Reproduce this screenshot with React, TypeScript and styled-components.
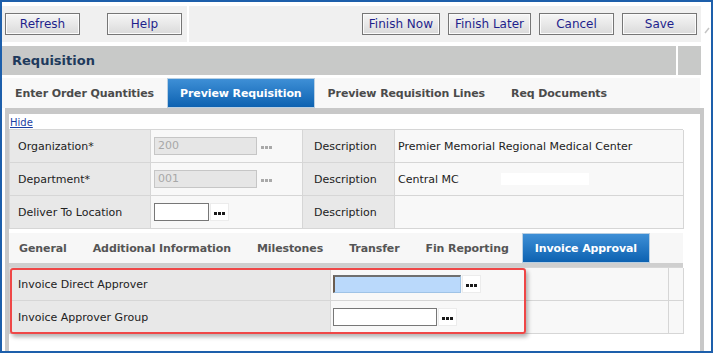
import React from "react";
import styled, { createGlobalStyle } from "styled-components";

const Global = createGlobalStyle`
  html, body { margin: 0; padding: 0; background: #fff; }
  body { font-family: "DejaVu Sans", Verdana, sans-serif; }
`;

const Frame = styled.div`
  position: relative;
  width: 713px;
  height: 353px;
  box-sizing: border-box;
  border: 2px solid #1d5fab;
  background: #fff;
  display: flex;
  overflow: hidden;
`;

const Main = styled.div`
  width: 702px;
  display: flex;
  flex-direction: column;
`;

const Gutter = styled.div`
  flex: 1;
  background: #fff;
  padding-top: 18px;
`;

const Toolbar = styled.div`
  margin-top: 4px;
  height: 36px;
  display: flex;
  gap: 2px;
  margin-right: 3px;
`;

const ToolGroup = styled.div<{ $grow?: boolean }>`
  background: #f0f0f0;
  display: flex;
  align-items: flex-start;
  box-sizing: border-box;
  padding-top: 7px;
  ${(p) =>
    p.$grow
      ? `flex: 1; justify-content: flex-end; gap: 8px; padding-right: 4px;`
      : `width: 185px; justify-content: space-between; padding-left: 3px; padding-right: 5px;`}
`;

const ToolButton = styled.button`
  height: 22px;
  min-width: 75px;
  padding: 0 6px;
  box-sizing: border-box;
  border: 1px solid #767676;
  box-shadow: inset 0 0 0 1px #fbfbfb;
  background: linear-gradient(#f6f6f6, #dadada);
  color: #1f1f8c;
  font-family: "DejaVu Sans", Verdana, sans-serif;
  font-size: 12px;
  line-height: 20px;
  cursor: pointer;
`;

const HeaderBar = styled.div`
  margin-top: 4px;
  height: 29px;
  display: flex;
  gap: 2px;
  margin-right: 3px;
`;

const HeaderMain = styled.div`
  flex: 1;
  background: #c8c9c8;
  display: flex;
  align-items: center;
  padding-left: 10px;
  color: #1e3a5c;
  font-weight: bold;
  font-size: 13px;
`;

const HeaderEnd = styled.div`
  width: 23px;
  background: #c8c9c8;
`;

const TabBar = styled.div`
  margin-top: 3px;
  height: 30px;
  margin-right: 4px;
  background: #f8f8f8;
  display: flex;
`;

const Tab = styled.div<{ $active?: boolean }>`
  height: 30px;
  box-sizing: border-box;
  padding: 0 ${(p) => (p.$active ? 12 : 13)}px;
  display: flex;
  align-items: center;
  font-size: 11px;
  font-weight: bold;
  letter-spacing: -0.1px;
  white-space: nowrap;
  color: ${(p) => (p.$active ? "#fff" : "#4b4b4b")};
  background: ${(p) =>
    p.$active ? "linear-gradient(#3e8fd6, #0d62b1)" : "transparent"};
  border: ${(p) => (p.$active ? "1px solid #b9cfe2" : "none")};
`;

const SubTab = styled(Tab)`
  color: ${(p) => (p.$active ? "#fff" : "#555")};
  &:first-child {
    padding-left: 10px;
  }
`;

const Panel = styled.div`
  margin-left: 3px;
  flex: 1;
  border: 4px solid #c8c8c8;
  border-top-width: 6px;
  border-bottom: none;
  background: #fff;
  display: flex;
  flex-direction: column;
`;

const HideRow = styled.div`
  height: 15px;
  padding-left: 1px;
  display: flex;
  align-items: flex-end;
`;

const HideLink = styled.a`
  color: #1c3fa3;
  font-size: 10px;
  text-decoration: underline;
  line-height: 12px;
  cursor: pointer;
`;

const FormGrid = styled.div<{ $cols: string }>`
  width: 674px;
  display: grid;
  grid-template-columns: ${(p) => p.$cols};
  grid-auto-rows: 33px;
  border-top: 1px solid #d6d6d6;
  border-left: 1px solid #d6d6d6;
  box-sizing: border-box;
`;

const Cell = styled.div<{ $label?: boolean; $pad?: number }>`
  box-sizing: border-box;
  border-right: 1px solid #d6d6d6;
  border-bottom: 1px solid #d6d6d6;
  background: ${(p) => (p.$label ? "#e8e8e8" : "#f8f8f8")};
  display: flex;
  align-items: center;
  padding-left: ${(p) => p.$pad ?? 0}px;
  font-size: 11px;
  color: #222;
  white-space: nowrap;
`;

const TextBox = styled.div<{ $w: number; $disabled?: boolean; $focused?: boolean }>`
  width: ${(p) => p.$w}px;
  height: 18px;
  box-sizing: border-box;
  border: 1px solid ${(p) => (p.$disabled ? "#c6c6c6" : "#777")};
  ${(p) =>
    p.$focused
      ? `border-top: 2px solid #6f6f6f; border-left: 2px solid #6b5d50; border-right-color: #9fc3e6; border-bottom-color: #9fc3e6;`
      : ""}
  background: ${(p) =>
    p.$disabled ? "#e6e6e6" : p.$focused ? "#bad9fb" : "#fff"};
  color: #a8a8a8;
  font-size: 11px;
  line-height: 16px;
  padding-left: 3px;
`;

const DotsBox = styled.div<{ $plain?: boolean }>`
  width: ${(p) => (p.$plain ? 14 : 19)}px;
  height: 18px;
  box-sizing: border-box;
  margin-left: ${(p) => (p.$plain ? 2 : 1)}px;
  background: ${(p) => (p.$plain ? "transparent" : "#fff")};
  border: 1px solid ${(p) => (p.$plain ? "transparent" : "#ececec")};
  display: flex;
  justify-content: center;
  align-items: center;
  padding-top: 3px;
  gap: 1px;
`;

const Dot = styled.span<{ $disabled?: boolean }>`
  width: 3px;
  height: 3px;
  background: ${(p) => (p.$disabled ? "#a9a9a9" : "#1a1a1a")};
`;

const Redact = styled.span`
  display: inline-block;
  width: 88px;
  height: 12px;
  margin-left: 42px;
  background: #fff;
`;

const Gap = styled.div<{ $h: number }>`
  height: ${(p) => p.$h}px;
`;

const SubTabBar = styled.div`
  width: 674px;
  height: 30px;
  background: #f7f7f7;
  display: flex;
`;

const Strip = styled.div`
  width: 674px;
  height: 4px;
  background: #cfcfcf;
`;

const Highlight = styled.div`
  position: absolute;
  left: 8px;
  top: 266px;
  width: 516px;
  height: 66px;
  box-sizing: border-box;
  border: 2px solid #ef4747;
  border-radius: 3px;
  box-shadow: 2px 3px 4px rgba(0, 0, 0, 0.3);
  pointer-events: none;
`;

const Dots = ({ disabled, plain }: { disabled?: boolean; plain?: boolean }) => (
  <DotsBox $plain={plain}>
    <Dot $disabled={disabled} />
    <Dot $disabled={disabled} />
    <Dot $disabled={disabled} />
  </DotsBox>
);

export default function App() {
  return (
    <>
      <Global />
      <Frame>
        <Main>
          <Toolbar>
            <ToolGroup>
              <ToolButton>Refresh</ToolButton>
              <ToolButton>Help</ToolButton>
            </ToolGroup>
            <ToolGroup $grow>
              <ToolButton>Finish Now</ToolButton>
              <ToolButton>Finish Later</ToolButton>
              <ToolButton>Cancel</ToolButton>
              <ToolButton>Save</ToolButton>
            </ToolGroup>
          </Toolbar>
          <HeaderBar>
            <HeaderMain>Requisition</HeaderMain>
            <HeaderEnd />
          </HeaderBar>
          <TabBar>
            <Tab>Enter Order Quantities</Tab>
            <Tab $active>Preview Requisition</Tab>
            <Tab>Preview Requisition Lines</Tab>
            <Tab>Req Documents</Tab>
          </TabBar>
          <Panel>
            <HideRow>
              <HideLink>Hide</HideLink>
            </HideRow>
            <FormGrid $cols="141px 152px 92px 289px">
              <Cell $label $pad={8}>Organization*</Cell>
              <Cell $pad={3}>
                <TextBox $w={103} $disabled>200</TextBox>
                <Dots disabled plain />
              </Cell>
              <Cell $label $pad={11}>Description</Cell>
              <Cell $pad={3}>Premier Memorial Regional Medical Center</Cell>

              <Cell $label $pad={8}>Department*</Cell>
              <Cell $pad={3}>
                <TextBox $w={103} $disabled>001</TextBox>
                <Dots disabled plain />
              </Cell>
              <Cell $label $pad={11}>Description</Cell>
              <Cell $pad={3}>
                Central MC
                <Redact />
              </Cell>

              <Cell $label $pad={8}>Deliver To Location</Cell>
              <Cell $pad={3}>
                <TextBox $w={55} />
                <Dots />
              </Cell>
              <Cell $label $pad={11}>Description</Cell>
              <Cell $pad={3} />
            </FormGrid>
            <Gap $h={4} />
            <SubTabBar>
              <SubTab>General</SubTab>
              <SubTab>Additional Information</SubTab>
              <SubTab>Milestones</SubTab>
              <SubTab>Transfer</SubTab>
              <SubTab>Fin Reporting</SubTab>
              <SubTab $active>Invoice Approval</SubTab>
            </SubTabBar>
            <Strip />
            <FormGrid $cols="321px 338px 15px">
              <Cell $label $pad={8}>Invoice Direct Approver</Cell>
              <Cell $pad={2}>
                <TextBox $w={128} $focused />
                <Dots />
              </Cell>
              <Cell />
              <Cell $label $pad={8}>Invoice Approver Group</Cell>
              <Cell $pad={2}>
                <TextBox $w={104} />
                <Dots />
              </Cell>
              <Cell />
            </FormGrid>
          </Panel>
        </Main>
        <Gutter>
          <svg width="7" height="10" viewBox="0 0 7 10">
            <path d="M1 8 L5 3" stroke="#c4c4c4" strokeWidth="1.5" fill="none" />
          </svg>
        </Gutter>
        <Highlight />
      </Frame>
    </>
  );
}
